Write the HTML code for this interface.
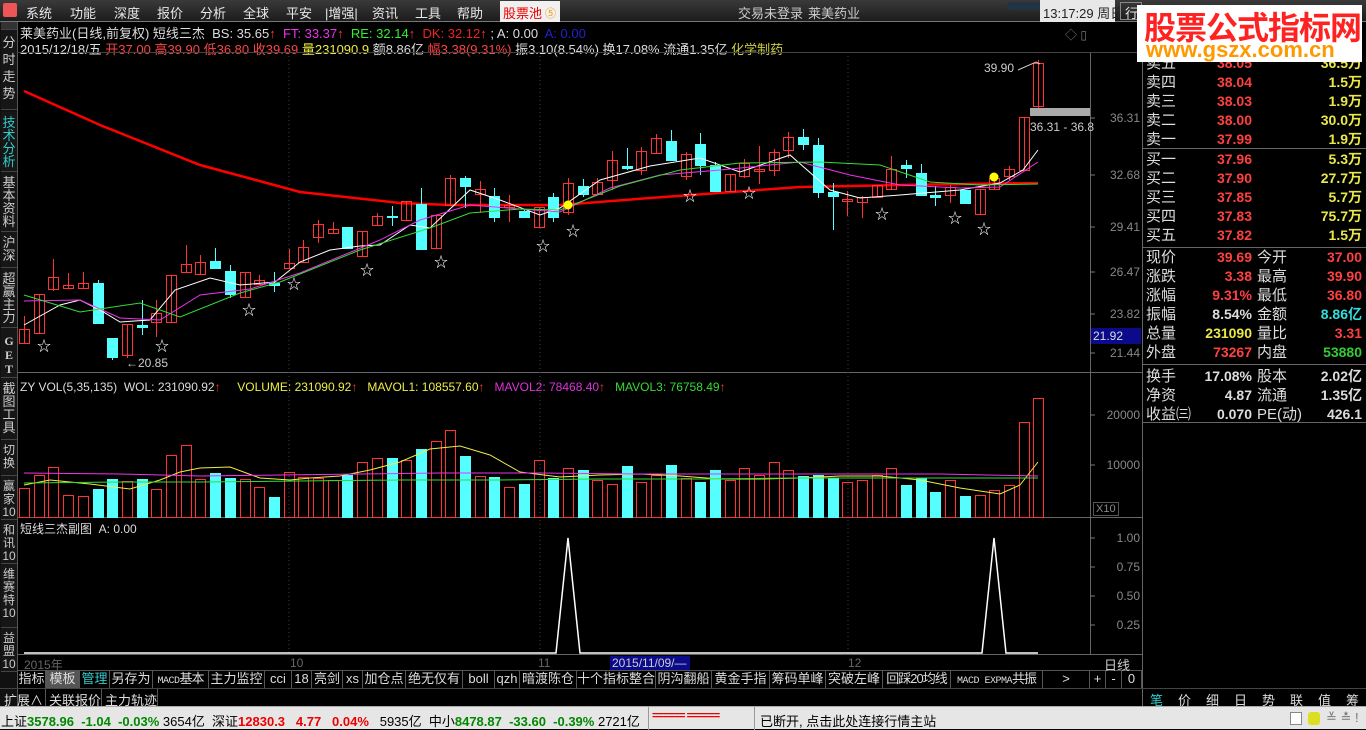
<!DOCTYPE html>
<html><head><meta charset="utf-8">
<style>
*{margin:0;padding:0;box-sizing:border-box}
body{width:1366px;height:729px;background:#000;overflow:hidden;position:relative;font-family:"Liberation Sans","Noto Sans CJK SC",sans-serif;color:#ddd}
.a{position:absolute;white-space:nowrap}
#menu{left:0;top:0;width:1366px;height:22px;background:linear-gradient(#3a3a3a,#1c1c1c);border-bottom:1px solid #777}
#menu span{position:absolute;top:3px;font-size:13px;color:#e8e8e8}
.vt{position:absolute;left:1px;width:16px;font-size:12px;line-height:13px;text-align:center;color:#ccc;background:#161616;border-bottom:1px solid #444;white-space:normal;word-break:break-all;overflow:hidden}
.ob{position:absolute;font-size:14px;line-height:19px}
.lb{color:#ddd;font-size:15px}
.tab{position:absolute;top:671px;height:17px;font-size:13px;color:#ddd;border-right:1px solid #555;line-height:16px;white-space:nowrap;overflow:hidden;text-align:center}
.ax{position:absolute;font-size:12px;color:#888;right:0;text-align:right;width:50px}
</style></head><body>
<div id="menu" class="a">
<div class="a" style="left:3px;top:3px;width:14px;height:14px;background:#e55;border-radius:2px"></div>
<span style="left:26px">系统</span><span style="left:70px">功能</span><span style="left:114px">深度</span><span style="left:157px">报价</span><span style="left:200px">分析</span><span style="left:243px">全球</span><span style="left:286px">平安</span><span style="left:325px">|增强|</span><span style="left:372px">资讯</span><span style="left:415px">工具</span><span style="left:457px">帮助</span>
<div class="a" style="left:500px;top:1px;width:60px;height:21px;background:#f0f0f0"></div><span style="left:503px;color:#e00">股票池</span><span style="left:545px;color:#e90;font-size:11px;top:5px">⑤</span>
<span style="left:738px;color:#ccc">交易未登录</span><span style="left:808px;color:#ccc">莱美药业</span>
<div class="a" style="left:1007px;top:2px;width:55px;height:8px;background:#234;border-radius:3px"></div>
<div class="a" style="left:1040px;top:0;width:75px;height:22px;background:#e8e8e8"></div><span style="left:1043px;color:#222">13:17:29 周日</span>
<div class="a" style="left:1120px;top:2px;width:22px;height:18px;border:1px solid #888"></div><span style="left:1125px">行</span>
</div>
<!-- left strip -->
<div class="a" style="left:0;top:22px;width:18px;height:684px;background:#111;border-right:1px solid #555"></div>
<div class="vt" style="top:22px;height:8px;background:#333"></div>
<div class="vt" style="top:30px;height:80px;padding-top:4px;font-size:13px;line-height:17px">分时走势</div>
<div class="vt" style="top:112px;height:60px;color:#3cc;padding-top:4px;font-size:13px">技术分析</div>
<div class="vt" style="top:172px;height:60px;padding-top:4px;font-size:13px">基本资料</div>
<div class="vt" style="top:232px;height:36px;padding-top:4px;font-size:13px">沪深</div>
<div class="vt" style="top:268px;height:60px;padding-top:4px;font-size:13px">超赢主力</div>
<div class="vt" style="top:328px;height:50px;padding-top:6px;font-family:'Liberation Serif',serif;font-weight:bold;font-size:12px;line-height:14px">G E T</div>
<div class="vt" style="top:378px;height:62px;padding-top:4px;font-size:13px">截图工具</div>
<div class="vt" style="top:440px;height:36px;padding-top:4px">切换</div>
<div class="vt" style="top:476px;height:44px;padding-top:4px">赢家10</div>
<div class="vt" style="top:520px;height:44px;padding-top:4px">和讯10</div>
<div class="vt" style="top:564px;height:64px;padding-top:4px">维赛特10</div>
<div class="vt" style="top:628px;height:44px;padding-top:4px">益盟10</div>
<!-- info lines -->
<div class="a" style="left:20px;top:23px;font-size:13px"><span style="color:#ddd">莱美药业(日线,前复权) 短线三杰&nbsp; BS: 35.65</span><span style="color:#f33">↑</span>&nbsp; <span style="color:#e3e">FT: 33.37</span><span style="color:#f33">↑</span>&nbsp; <span style="color:#3e3">RE: 32.14</span><span style="color:#f33">↑</span>&nbsp; <span style="color:#e22">DK: 32.12</span><span style="color:#f33">↑</span> <span>; A: 0.00&nbsp; </span><span style="color:#22c">A: 0.00</span></div>
<div class="a" style="left:20px;top:39px;font-size:13px"><span>2015/12/18/五 </span><span style="color:#f44">开37.00 高39.90 低36.80 收39.69 </span><span style="color:#ee4">量231090.9 </span><span>额8.86亿 </span><span style="color:#f44">幅3.38(9.31%) </span><span>振3.10(8.54%) 换17.08% 流通1.35亿 </span><span style="color:#cc4">化学制药</span></div>
<div class="a" style="left:1065px;top:26px;font-size:12px;color:#777">◇ ▯</div>
<svg id="ch" class="a" style="left:18px;top:0" width="1124" height="706" viewBox="18 0 1124 706"></svg>
<div class="ax" style="left:1090px;top:111px">36.31</div>
<div class="ax" style="left:1090px;top:168px">32.68</div>
<div class="ax" style="left:1090px;top:220px">29.41</div>
<div class="ax" style="left:1090px;top:265px">26.47</div>
<div class="ax" style="left:1090px;top:307px">23.82</div>
<div class="a" style="left:1091px;top:328px;width:50px;height:16px;background:#0a0a8a;color:#ddd;font-size:12px;padding:1px 2px">21.92</div>
<div class="ax" style="left:1090px;top:346px">21.44</div>
<div class="ax" style="left:1090px;top:408px">20000</div>
<div class="ax" style="left:1090px;top:458px">10000</div>
<div class="a" style="left:1093px;top:502px;font-size:11px;color:#888;border:1px solid #555;padding:0 2px">X10</div>
<div class="ax" style="left:1090px;top:531px">1.00</div>
<div class="ax" style="left:1090px;top:560px">0.75</div>
<div class="ax" style="left:1090px;top:589px">0.50</div>
<div class="ax" style="left:1090px;top:618px">0.25</div>
<div class="a" style="left:984px;top:61px;font-size:12px;color:#ccc">39.90</div>
<div class="a" style="left:1030px;top:120px;font-size:12px;color:#ccc">36.31 - 36.8</div>
<div class="a" style="left:126px;top:356px;font-size:12px;color:#ccc">←20.85</div>
<div class="a" style="left:20px;top:380px;font-size:12px"><span>ZY VOL(5,35,135)&nbsp; WOL: 231090.92</span><span style="color:#f33">↑</span>&nbsp;&nbsp;&nbsp;&nbsp; <span style="color:#ee4">VOLUME: 231090.92</span><span style="color:#f33">↑</span>&nbsp;&nbsp; <span style="color:#ee4">MAVOL1: 108557.60</span><span style="color:#f33">↑</span>&nbsp;&nbsp; <span style="color:#d3d">MAVOL2: 78468.40</span><span style="color:#f33">↑</span>&nbsp;&nbsp; <span style="color:#3d3">MAVOL3: 76758.49</span><span style="color:#f33">↑</span></div>
<div class="a" style="left:20px;top:520px;font-size:12px">短线三杰副图&nbsp; A: 0.00</div>
<div class="a" style="left:24px;top:656px;font-size:12px;color:#666">2015年</div>
<div class="a" style="left:290px;top:656px;font-size:12px;color:#666">10</div>
<div class="a" style="left:538px;top:656px;font-size:12px;color:#666">11</div>
<div class="a" style="left:848px;top:656px;font-size:12px;color:#666">12</div>
<div class="a" style="left:610px;top:656px;width:80px;height:14px;background:#0a0a8a;font-size:12px;color:#ccc;padding-left:2px">2015/11/09/—</div>
<div class="a" style="left:1104px;top:655px;font-size:13px;color:#ccc">日线</div>
<div id="tabs"></div>
<div class="a" style="left:0;top:688px;width:1142px;height:17px;border-top:1px solid #444;font-size:13px;color:#ddd"><span class="a" style="left:4px;top:1px">扩展∧</span><span class="a" style="left:45px;top:0;height:17px;border-left:1px solid #555"></span><span class="a" style="left:49px;top:1px">关联报价</span><span class="a" style="left:101px;top:0;height:17px;border-left:1px solid #555"></span><span class="a" style="left:105px;top:1px">主力轨迹</span><span class="a" style="left:157px;top:0;height:17px;border-left:1px solid #555"></span></div>
<div class="a" style="left:1142px;top:22px;width:224px;height:684px;border-left:1px solid #666;background:#000"></div>
<div id="rp"></div>
<div class="a" style="left:1137px;top:5px;width:225px;height:57px;background:#fff"></div>
<div class="a" style="left:1144px;top:3px;font-size:32px;font-weight:bold;color:#f22;font-family:'Noto Sans CJK SC',sans-serif;letter-spacing:-1px">股票公式指标网</div>
<div class="a" style="left:1146px;top:37px;font-size:22px;font-weight:bold;color:#f90">www.gszx.com.cn</div>
<div class="a" style="left:1142px;top:688px;width:224px;height:18px;border-top:1px solid #444;font-size:13px">
<span class="a" style="left:8px;top:1px;color:#3cc">笔</span><span class="a" style="left:36px;top:1px">价</span><span class="a" style="left:64px;top:1px">细</span><span class="a" style="left:92px;top:1px">日</span><span class="a" style="left:120px;top:1px">势</span><span class="a" style="left:148px;top:1px">联</span><span class="a" style="left:176px;top:1px">值</span><span class="a" style="left:204px;top:1px">筹</span></div>
<div class="a" style="left:0;top:706px;width:1366px;height:23px;background:#e6e6e6;border-top:1px solid #aaa;font-size:13px;color:#000">
<span class="a" style="left:1px;top:4px">上证<b style="color:#080">3578.96&nbsp; -1.04&nbsp; -0.03%</b> 3654亿&nbsp; 深证<b style="color:#e00">12830.3&nbsp;&nbsp; 4.77&nbsp;&nbsp; 0.04%</b>&nbsp;&nbsp; 5935亿&nbsp; 中小<b style="color:#080">8478.87&nbsp; -33.60&nbsp; -0.39%</b> 2721亿</span>
<span class="a" style="left:648px;top:0;height:23px;border-left:1px solid #999"></span>
<span class="a" style="left:652px;top:3px;color:#e00;font-size:11px;font-weight:bold;letter-spacing:-1px">====== ======</span>
<span class="a" style="left:754px;top:0;height:23px;border-left:1px solid #999"></span>
<span class="a" style="left:760px;top:4px">已断开, 点击此处连接行情主站</span>
<span class="a" style="left:1290px;top:5px;width:12px;height:13px;border:1px solid #888;background:#fff"></span>
<span class="a" style="left:1308px;top:5px;width:12px;height:13px;background:#dd2;border-radius:3px"></span>
<span class="a" style="left:1326px;top:3px;color:#777">≚ ≛ !</span>
</div>
<script>
var C=[[329,343,316,343,'r'],[294,333,294,333,'r'],[277,289,259,291,'r'],[285,288,273,288,'r'],[283,288,272,288,'r'],[283,323,280,323,'c'],[338,357,338,360,'c'],[324,355,324,358,'r'],[325,327,300,335,'c'],[313,322,300,337,'r'],[275,322,275,322,'r'],[264,272,245,272,'r'],[262,274,255,274,'r'],[261,268,248,268,'c'],[271,294,265,298,'c'],[272,297,272,297,'r'],[280,284,275,284,'r'],[283,285,272,292,'c'],[263,268,249,268,'r'],[247,262,240,262,'r'],[224,237,220,243,'r'],[229,233,222,233,'r'],[227,248,227,248,'c'],[231,256,231,256,'r'],[216,225,213,225,'r'],[216,217,206,226,'c'],[201,220,201,220,'r'],[204,249,188,249,'c'],[215,248,215,248,'r'],[178,205,175,205,'r'],[178,186,176,208,'c'],[189,194,181,213,'r'],[196,217,188,222,'c'],[205,207,195,222,'r'],[211,217,209,217,'c'],[207,227,207,227,'r'],[197,217,193,222,'c'],[183,212,178,215,'r'],[186,194,179,197,'c'],[182,194,178,194,'r'],[160,180,151,190,'r'],[166,168,148,170,'c'],[151,170,147,175,'r'],[138,153,134,153,'r'],[141,160,130,160,'c'],[154,176,152,180,'r'],[144,165,133,175,'c'],[165,191,162,191,'c'],[174,191,174,191,'r'],[163,176,159,178,'r'],[169,171,146,184,'r'],[152,170,149,176,'r'],[137,150,132,158,'r'],[137,144,129,150,'c'],[145,192,138,198,'c'],[192,196,183,230,'c'],[199,201,191,216,'r'],[197,202,196,218,'r'],[185,197,185,197,'r'],[169,189,156,189,'r'],[165,168,160,178,'c'],[173,195,164,195,'c'],[195,197,186,206,'c'],[187,195,185,203,'r'],[190,203,190,203,'c'],[189,214,189,214,'r'],[178,189,178,189,'r'],[169,176,166,180,'r'],[117,170,117,170,'r'],[63,106,60,108,'r']];
var V=[488,475,467,495,496,489,479,481,479,489,455,445,479,473,478,479,487,497,472,477,478,480,475,462,458,458,460,449,441,430,456,476,477,487,484,460,478,468,470,480,484,466,482,475,465,478,482,470,480,468,475,462,470,476,475,478,482,480,475,468,485,478,492,480,496,495,490,485,422,398];
var s='';
s+='<line x1="18" y1="372.5" x2="1142" y2="372.5" stroke="#666"/><line x1="18" y1="517.5" x2="1142" y2="517.5" stroke="#666"/><line x1="18" y1="654.5" x2="1142" y2="654.5" stroke="#666"/><line x1="18" y1="670.5" x2="1142" y2="670.5" stroke="#555"/><line x1="1090.5" y1="52" x2="1090.5" y2="655" stroke="#666"/><line x1="18" y1="52.5" x2="1142" y2="52.5" stroke="#444"/>';
[289,540,848].forEach(function(x){s+='<line x1="'+x+'" y1="52" x2="'+x+'" y2="655" stroke="#444" stroke-dasharray="1,3"/>';});
[118,175,227,272,314,353,415,465,538,567,596,625].forEach(function(y){s+='<line x1="1090" y1="'+y+'" x2="1095" y2="'+y+'" stroke="#777"/>';});
s+='<polyline fill="none" stroke="#f00" stroke-width="2.5" points="24,91 100,125 200,165 300,192 400,203 450,205 560,205 650,198 800,187 900,185 1038,183"/>';
C.forEach(function(c,i){var x=Math.round(24+i*14.7);var col=c[4]=='r'?'#f33':'#5ff';
s+='<line x1="'+(x+.5)+'" y1="'+c[2]+'" x2="'+(x+.5)+'" y2="'+c[3]+'" stroke="'+col+'"/>';
var h=Math.max(1,c[1]-c[0]);
if(c[4]=='r')s+='<rect x="'+(x-4.5)+'" y="'+(c[0]+.5)+'" width="10" height="'+h+'" fill="none" stroke="#f33"/>';
else s+='<rect x="'+(x-5)+'" y="'+c[0]+'" width="11" height="'+(h+1)+'" fill="#5ff"/>';
var vt=V[i];if(c[4]=='r')s+='<rect x="'+(x-4.5)+'" y="'+(vt+.5)+'" width="10" height="'+(517-vt)+'" fill="none" stroke="#f33"/>';else s+='<rect x="'+(x-5)+'" y="'+vt+'" width="11" height="'+(518-vt)+'" fill="#5ff"/>';});
s+='<polyline fill="none" stroke="#fff" points="24,325 60,305 80,300 100,310 120,322 150,320 175,290 210,278 240,285 275,282 300,262 330,250 360,246 380,245 410,225 430,228 470,190 500,200 540,215 560,208 600,180 650,166 700,158 740,172 790,155 830,190 860,198 900,195 960,190 1000,183 1023,170 1038,150"/>';
s+='<polyline fill="none" stroke="#e3e" points="24,301 80,300 120,318 160,320 200,295 250,289 300,273 380,240 420,220 470,205 520,209 560,212 610,188 660,175 720,170 800,162 850,175 900,185 960,188 1000,187 1038,162"/>';
s+='<polyline fill="none" stroke="#3d3" points="24,295 80,312 140,303 180,317 240,293 280,282 360,250 430,228 470,213 520,209 560,210 620,186 680,170 740,163 820,162 880,165 930,182 980,185 1038,184"/>';
[[44,346],[162,346],[249,310],[294,284],[367,270],[441,262],[543,246],[573,231],[690,196],[749,193],[882,214],[955,218],[984,229]].forEach(function(p){s+='<text x="'+p[0]+'" y="'+(p[1]+5)+'" fill="#fff" font-size="14" text-anchor="middle">☆</text>';});
s+='<circle cx="568" cy="205" r="4.5" fill="#ff0"/><circle cx="994" cy="177" r="4.5" fill="#ff0"/>';
s+='<rect x="1030" y="108" width="60" height="8" fill="#aaa"/><polyline fill="none" stroke="#ccc" points="1018,70 1036,62 1040,64"/>';
s+='<polyline fill="none" stroke="#ee4" points="24,485 50,480 90,484 130,489 160,480 180,472 200,468 230,467 260,478 290,480 310,478 340,476 370,470 400,462 430,449 460,446 490,455 520,472 560,477 600,475 640,474 680,476 720,479 760,479 800,478 840,476 880,476 920,480 960,488 1000,494 1020,485 1038,462"/>';
s+='<polyline fill="none" stroke="#e3e" points="24,473 120,474 200,476 280,475 360,474 440,473 540,473 640,474 740,474 840,474 940,474 1038,476"/>';
s+='<polyline fill="none" stroke="#3d3" points="24,483 120,482 200,482 300,481 400,480 500,480 600,479 700,479 800,478 900,478 1000,478 1038,478"/>';
s+='<polyline fill="none" stroke="#fff" stroke-width="1.5" points="24,653 556,653 568,538 580,653 982,653 994,538 1006,653 1038,653"/>';
document.getElementById('ch').innerHTML=s;
var T=[['指标',18,46],['模板',46,80],['管理',80,110],['另存为',110,153],['MACD基本',153,209],['主力监控',209,265],['cci',265,292],['18',292,312],['亮剑',312,343],['xs',343,363],['加仓点',363,406],['绝无仅有',406,463],['boll',463,495],['qzh',495,520],['暗渡陈仓',520,577],['十个指标整合',577,656],['阴沟翻船',656,712],['黄金手指',712,770],['筹码单峰',770,826],['突破左峰',826,883],['回踩20均线',883,951],['MACD EXPMA共振',951,1043],['&gt;',1043,1090],['+',1090,1106],['-',1106,1122],['0',1122,1142]];
var h='';T.forEach(function(t,i){var st='left:'+t[1]+'px;width:'+(t[2]-t[1])+'px;';if(i==1)st+='background:#555;';if(i==2)st+='color:#3cc;';
var tx=t[0];if(/^[a-z0-9]+$/i.test(tx)&&tx.length>1)st+='font-family:"Liberation Mono",monospace;font-size:11px;';
if(tx.indexOf('MACD')==0){tx=tx.replace(/(MACD( EXPMA)?)/,'<span style="font-family:Liberation Mono,monospace;font-size:10px;letter-spacing:-0.5px">$1</span>');st+='letter-spacing:-1px;';}
if(tx=='回踩20均线')st+='letter-spacing:-1px;';
h+='<div class="tab" style="'+st+'">'+tx+'</div>';});
document.getElementById('tabs').innerHTML=h;
var R=[['卖五','38.05','36.5万'],['卖四','38.04','1.5万'],['卖三','38.03','1.9万'],['卖二','38.00','30.0万'],['卖一','37.99','1.9万'],null,['买一','37.96','5.3万'],['买二','37.90','27.7万'],['买三','37.85','5.7万'],['买四','37.83','75.7万'],['买五','37.82','1.5万']];
var o='',y=54;
R.forEach(function(r){if(!r){o+='<div class="a" style="left:1142px;top:'+(y-1)+'px;width:224px;border-top:1px solid #666"></div>';y+=1;return;}
o+='<div class="ob lb a" style="left:1146px;top:'+y+'px">'+r[0]+'</div><div class="ob a" style="left:1180px;width:72px;text-align:right;font-weight:bold;color:#ff4040;top:'+y+'px">'+r[1]+'</div><div class="ob a" style="left:1280px;width:82px;text-align:right;font-weight:bold;color:#e8e84a;top:'+y+'px">'+r[2]+'</div>';y+=19;});
o+='<div class="a" style="left:1142px;top:247px;width:224px;border-top:1px solid #666"></div>';
var Q=[['现价','39.69','r','今开','37.00','r'],['涨跌','3.38','r','最高','39.90','r'],['涨幅','9.31%','r','最低','36.80','r'],['振幅','8.54%','w','金额','8.86亿','c'],['总量','231090','y','量比','3.31','r'],['外盘','73267','r','内盘','53880','g'],null,['换手','17.08%','w','股本','2.02亿','w'],['净资','4.87','w','流通','1.35亿','w'],['收益㈢','0.070','w','PE(动)','426.1','w']];
var cl={r:'#ff4040',w:'#ddd',y:'#e8e84a',c:'#3dd',g:'#3c3'};y=248;
Q.forEach(function(r){if(!r){o+='<div class="a" style="left:1142px;top:'+(y+2)+'px;width:224px;border-top:1px solid #666"></div>';y+=5;return;}
o+='<div class="ob lb a" style="left:1146px;top:'+y+'px">'+r[0]+'</div><div class="ob a" style="left:1180px;width:72px;text-align:right;font-weight:bold;color:'+cl[r[2]]+';top:'+y+'px">'+r[1]+'</div><div class="ob lb a" style="left:1257px;top:'+y+'px">'+r[3]+'</div><div class="ob a" style="left:1290px;width:72px;text-align:right;font-weight:bold;color:'+cl[r[5]]+';top:'+y+'px">'+r[4]+'</div>';y+=19;});
o+='<div class="a" style="left:1142px;top:422px;width:224px;border-top:1px solid #666"></div>';
document.getElementById('rp').innerHTML=o;
</script>
</body></html>
